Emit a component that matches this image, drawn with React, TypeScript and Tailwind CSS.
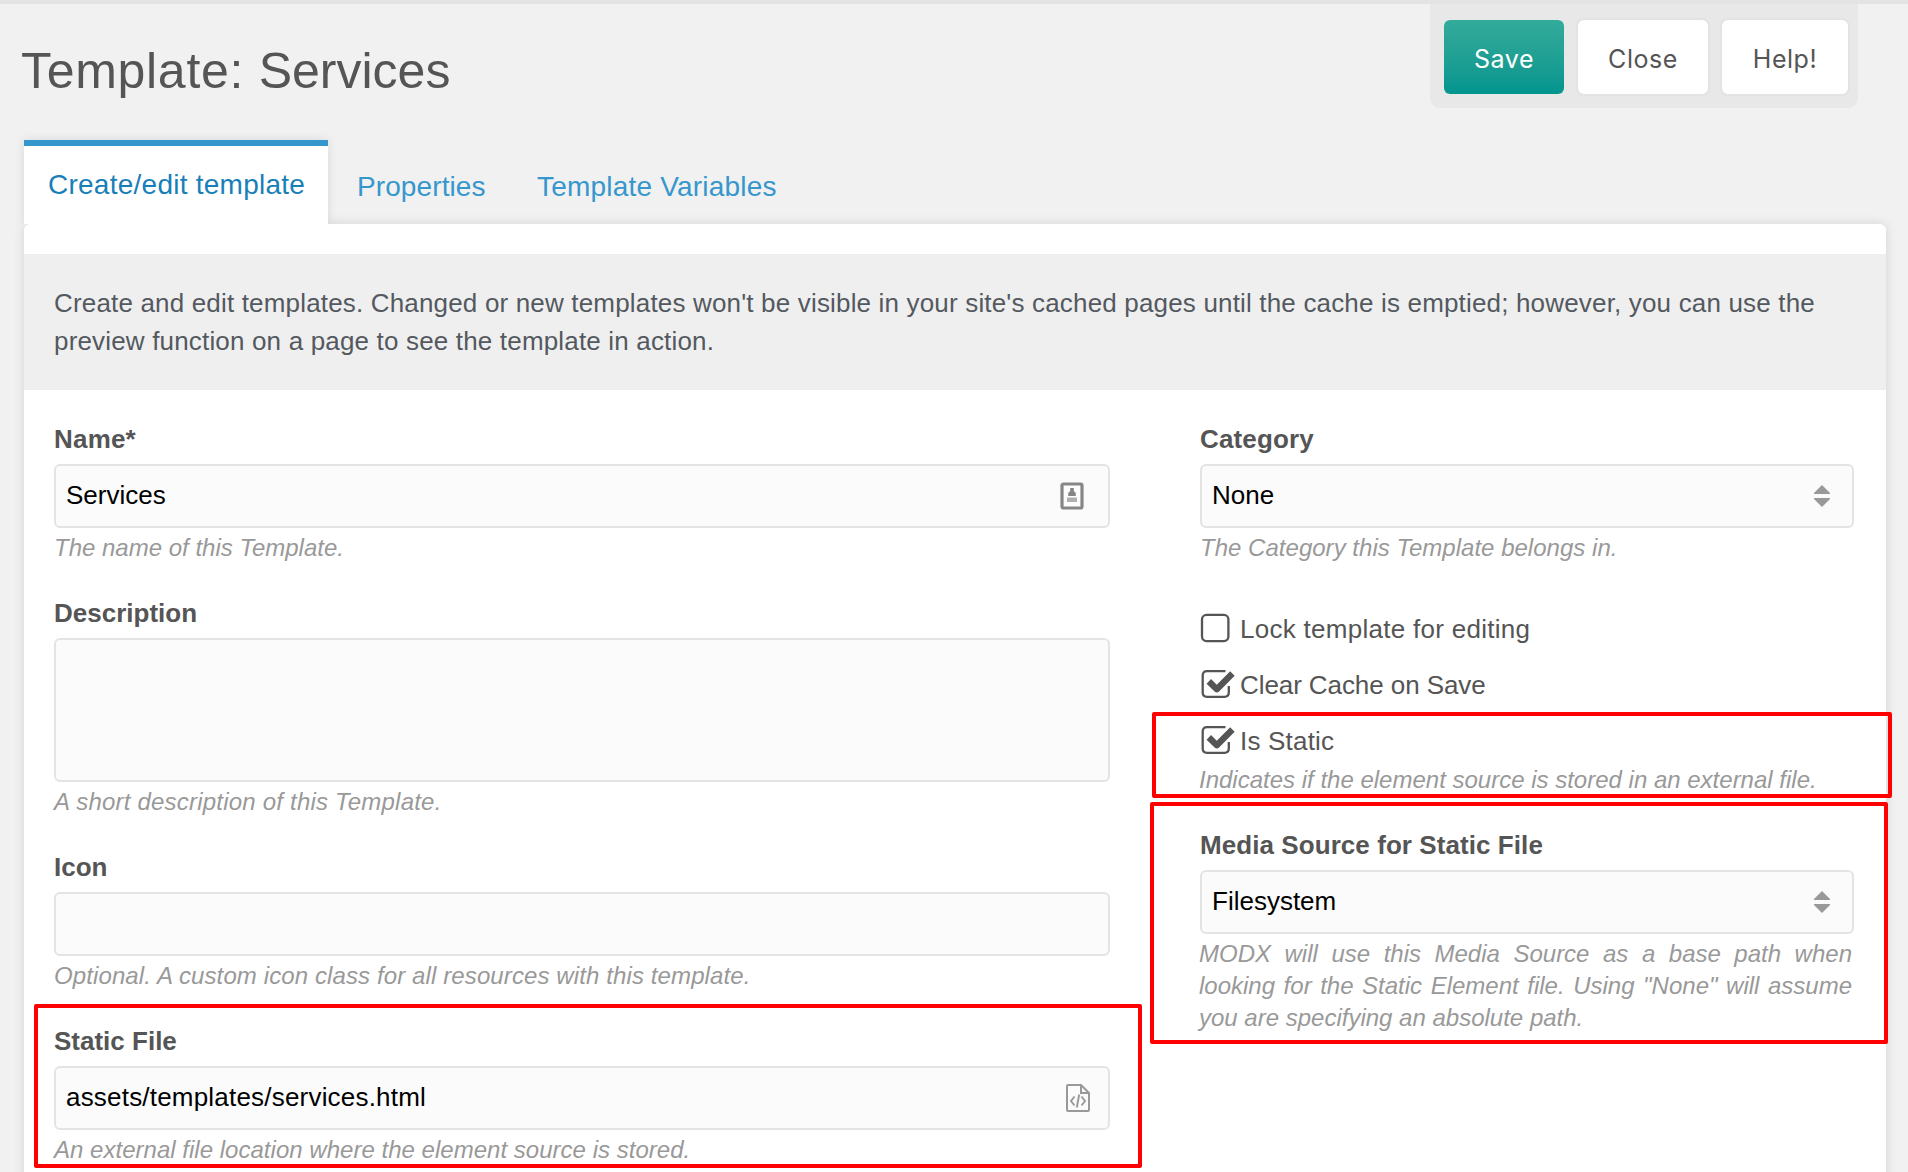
import React from "react";
import type { ReactNode } from "react";

const fieldBox =
  "flex h-16 w-full items-center rounded-md border-2 border-[#e4e4e4] bg-[#fbfbfb]";

function Label({ children }: { children: ReactNode }) {
  return (
    <label className="mb-[9px] block text-[26px] leading-8 font-bold text-[#555]">{children}</label>
  );
}

function Help({ children, className = "mt-1" }: { children: ReactNode; className?: string }) {
  return (
    <p className={`${className} text-justify text-[24px] leading-8 text-[#999] italic`}>
      {children}
    </p>
  );
}

function TextInput({ value, tracking = "", children }: { value?: string; tracking?: string; children?: ReactNode }) {
  return (
    <div className={fieldBox}>
      <input
        defaultValue={value}
        className={`h-[58px] min-w-0 flex-1 bg-transparent pb-[2px] pl-[10px] text-[26px] text-black outline-none ${tracking}`}
      />
      {children}
    </div>
  );
}

function Select({ value }: { value: string }) {
  return (
    <div className={`${fieldBox} justify-between pr-[22px] pl-[10px]`}>
      <span className="pb-[2px] text-[26px] leading-8 text-black">{value}</span>
      <svg className="h-[22px] w-4" viewBox="0 0 16 22" fill="#999">
        <path d="M8 0 L16 8 V9 H0 V8 Z" />
        <path d="M0 13 H16 V14 L8 22 L0 14 Z" />
      </svg>
    </div>
  );
}

function ContactCardIcon() {
  return (
    <svg className="mr-6 h-7 w-6 blur-[0.6px]" viewBox="0 0 24 28">
      <rect x="2" y="2" width="20" height="24" rx="1.5" fill="#fdfdfd" stroke="#868686" strokeWidth="3.2" />
      <path d="M10.2 6 H13.8 V9 L15.8 11 V14 H8.2 V11 L10.2 9 Z" fill="#858585" />
      <rect x="7" y="15.5" width="10" height="4.5" fill="#b0b0b0" />
    </svg>
  );
}

function FileCodeIcon() {
  return (
    <svg className="mr-[18px] h-7 w-6" viewBox="0 0 24 28" fill="none" stroke="#999" strokeWidth="2">
      <path d="M15 1 H2 Q1 1 1 2 V26 Q1 27 2 27 H22 Q23 27 23 26 V9 Z" strokeLinejoin="round" />
      <path d="M15 1 V9 H23" />
      <path d="M8.5 12.5 L5 17 L8.5 21.5 M15.5 12.5 L19 17 L15.5 21.5 M13.2 10.5 L10.8 23.5" strokeWidth="1.9" />
    </svg>
  );
}

function Check({ label, checked, tracking }: { label: string; checked?: boolean; tracking: string }) {
  return (
    <div className="flex h-8 items-center">
      <svg className="mr-[5px] h-8 w-[35px]" viewBox="0 0 35 32" fill="none" stroke="#555" strokeWidth="2.3">
        {checked ? (
          <>
            <path d="M25.5 2.2 H7 Q2.7 2.2 2.7 6.5 V23.5 Q2.7 27.8 7 27.8 H24.5 Q28.8 27.8 28.8 23.5 V17" />
            <path d="M8.8 12.4 L16.8 20.2 L32.4 4.6" strokeWidth="6.4" strokeLinejoin="round" />
          </>
        ) : (
          <rect x="2" y="1.9" width="26.4" height="26.2" rx="4.5" />
        )}
      </svg>
      <span className={`text-[26px] leading-8 text-[#555] ${tracking}`}>{label}</span>
    </div>
  );
}

const highlight = "pointer-events-none absolute rounded-[2px] border-4 border-[#ff0000]";
const actionButton =
  "flex h-[78px] items-center justify-center rounded-lg border-2 border-[#e3e3e3] bg-white pt-[5px] text-[#555]";

export default function App() {
  return (
    <div className="flex h-[1172px] w-[1908px] flex-col overflow-hidden border-t-4 border-[#e3e3e3] bg-[#f1f1f1] font-['Liberation_Sans',Arial,sans-serif]">
      <header className="flex h-[136px] shrink-0 items-start justify-between pr-[50px] pl-[21px]">
        <h1 className="mt-[39px] text-[50px] leading-[56px] text-[#555]">
          <span className="tracking-[0.7px]">Template: </span>Services
        </h1>
        <div className="flex h-[104px] w-[428px] items-start rounded-b-[10px] bg-[#e8e8e8] pt-[14px] pl-[14px] font-[Inter,sans-serif] text-[25px] tracking-[0.55px]">
          <button className="mt-[2px] mr-3 flex h-[74px] w-[120px] items-center justify-center rounded-md bg-linear-to-b from-[#32ab9a] to-[#00958e] pt-[5px] text-white">
            Save
          </button>
          <button className={`${actionButton} mr-[10px] w-[134px]`}>Close</button>
          <button className={`${actionButton} w-[130px]`}>Help!</button>
        </div>
      </header>

      <nav className="relative z-10 flex h-[84px] shrink-0 items-start pl-6 text-[28px] leading-8 text-[#3697cd]">
        <div className="h-[84px] w-[304px] border-t-[6px] border-[#3697cd] bg-white pt-[23px] pl-6 tracking-[0.25px] text-[#1a7fb8] shadow-[0_0_10px_rgba(0,0,0,0.1)] [clip-path:inset(-12px_-12px_0_-12px)]">
          Create/edit template
        </div>
        <div className="mt-[31px] ml-[29px] w-[180px] tracking-[0.1px]">Properties</div>
        <div className="mt-[31px] tracking-[0.2px]">Template Variables</div>
      </nav>

      <main className="relative mr-[22px] ml-6 h-[1000px] shrink-0 rounded-md bg-white pt-[30px] shadow-[0_0_12px_rgba(0,0,0,0.12)]">
        <p className="h-[136px] bg-[#efefef] pt-[30px] pl-[30px] text-[26px] leading-[38px] tracking-[0.17px] whitespace-nowrap text-[#53595f]">
          Create and edit templates. Changed or new templates won't be visible in your site's cached
          pages until the cache is emptied; however, you can use the
          <br />
          preview function on a page to see the template in action.
        </p>

        <div className="flex gap-[90px] pt-[33px] pl-[30px]">
          <section className="flex w-[1056px] flex-col gap-[33px]">
            <div>
              <Label><span className="tracking-[0.2px]">Name*</span></Label>
              <TextInput value="Services">
                <ContactCardIcon />
              </TextInput>
              <Help>The name of this Template.</Help>
            </div>
            <div>
              <Label>Description</Label>
              <textarea className="block h-36 w-full resize-none rounded-md border-2 border-[#e4e4e4] bg-[#fbfbfb] outline-none" />
              <Help><span className="tracking-[0.21px]">A short description of this Template.</span></Help>
            </div>
            <div>
              <Label>Icon</Label>
              <TextInput />
              <Help><span className="tracking-[0.11px]">Optional. A custom icon class for all resources with this template.</span></Help>
            </div>
            <div className="relative">
              <Label>Static File</Label>
              <TextInput value="assets/templates/services.html" tracking="tracking-[0.2px]">
                <FileCodeIcon />
              </TextInput>
              <Help><span className="tracking-[0.02px]">An external file location where the element source is stored.</span></Help>
              <div className={`${highlight} -top-[21px] -left-5 h-[164px] w-[1108px]`} />
            </div>
          </section>

          <section className="w-[654px]">
            <Label><span className="tracking-[0.15px]">Category</span></Label>
            <Select value="None" />
            <Help><span className="tracking-[0.02px]">The Category this Template belongs in.</span></Help>

            <div className="mt-[49px] flex flex-col gap-6">
              <Check label="Lock template for editing" tracking="tracking-[0.28px]" />
              <Check label="Clear Cache on Save" checked tracking="tracking-[-0.08px]" />
              <div className="relative">
                <Check label="Is Static" checked tracking="tracking-[0.2px]" />
                <Help className="mt-[7px] -ml-px">
                  Indicates if the element source is stored in an external file.
                </Help>
                <div className={`${highlight} -top-[13px] -left-12 h-[86px] w-[740px]`} />
              </div>
            </div>

            <div className="relative mt-[33px]">
              <Label><span className="tracking-[0.07px]">Media Source for Static File</span></Label>
              <Select value="Filesystem" />
              <Help className="mt-1 mr-[2px] -ml-px">
                MODX will use this Media Source as a base path when looking for the Static Element
                file. Using "None" will assume you are specifying an absolute path.
              </Help>
              <div className={`${highlight} -top-[27px] -left-[50px] h-[242px] w-[738px]`} />
            </div>
          </section>
        </div>
      </main>
    </div>
  );
}
